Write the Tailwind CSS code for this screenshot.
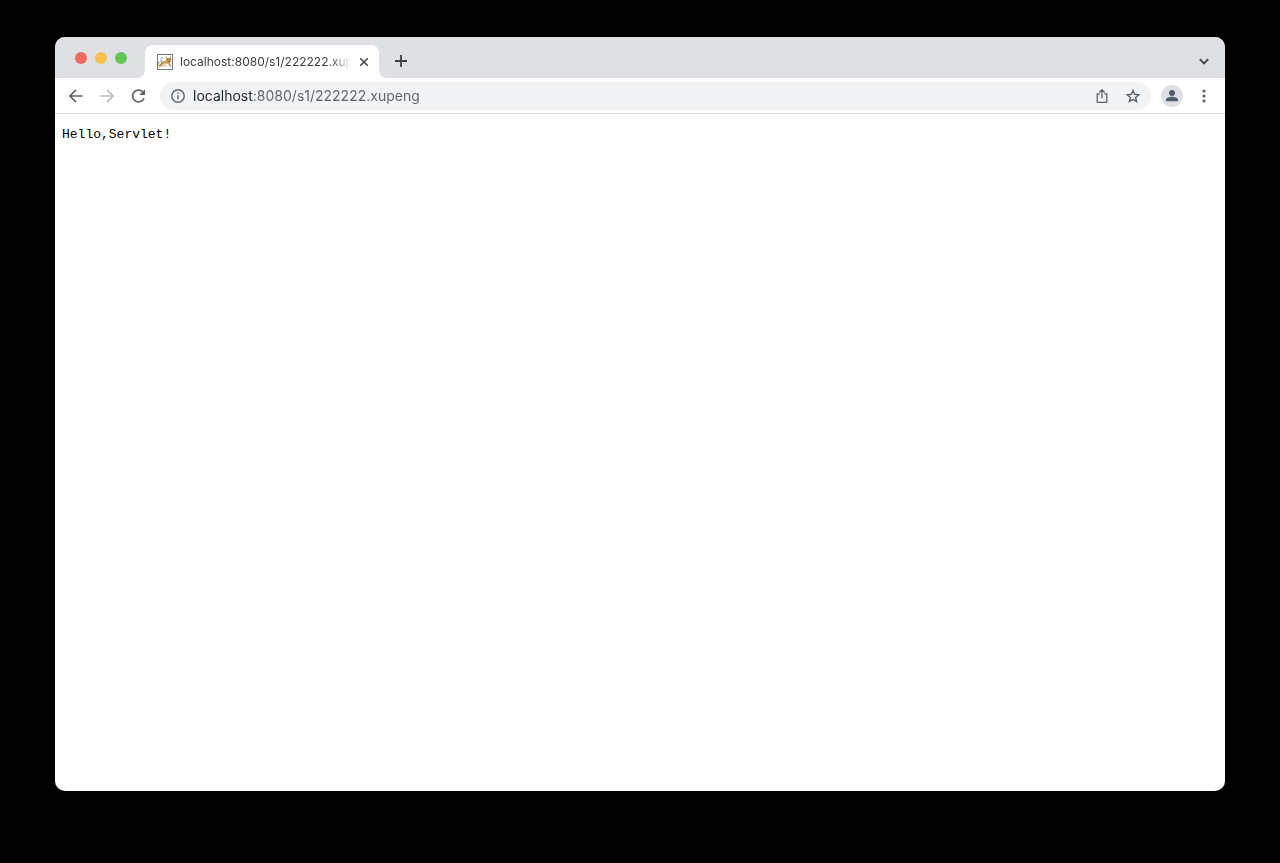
<!DOCTYPE html>
<html lang="en">
<head>
  <meta charset="UTF-8" />
  <meta name="viewport" content="width=device-width, initial-scale=1.0" />
  <title>localhost:8080/s1/222222.xupeng</title>
  <script src="https://cdn.jsdelivr.net/npm/@tailwindcss/browser@4"></script>
</head>
<body class="bg-black min-h-screen flex px-[55px] pt-[37px] pb-[72px] font-['Inter',sans-serif]">
  <div class="flex-1 min-w-0 flex flex-col bg-white rounded-[10px] overflow-hidden">

    <!-- Tab strip -->
    <header class="flex items-end h-[41px] bg-[#dee0e4] pl-5 pr-3">
      <div class="flex gap-2 pb-[14px]">
        <button aria-label="Close window" class="size-3 rounded-full bg-[#ed6a5e]"></button>
        <button aria-label="Minimize" class="size-3 rounded-full bg-[#f5bf4f]"></button>
        <button aria-label="Zoom" class="size-3 rounded-full bg-[#61c554]"></button>
      </div>

      <div class="flex items-end ml-[10px]">
        <svg class="size-2" viewBox="0 0 8 8" fill="#fff"><path d="M8 0v8H0a8 8 0 0 0 8-8z" /></svg>
        <div class="flex items-center w-[234px] h-[33px] bg-white rounded-t-lg pl-3 pr-[7px]">
          <svg class="size-4 shrink-0" viewBox="0 0 16 16">
            <rect x="0.5" y="0.5" width="15" height="15" fill="#fff" stroke="#777" />
            <path d="M6.500 7.500C4.500 7 3 5.500 4 4.200c.8-1 2-.6 2 .2" fill="none" stroke="#888" stroke-width="0.800" />
            <path d="M9 2.500l1.500 1.200h2L14 2.200l.3 4.300-1.500 2.300 1.700 3-2.500-.8-2-1.500-3 .3L4 12.500l-2.500 1.500 1-2.800L5 8l4-1.500z" fill="#c9a057" />
            <path d="M1 9l2.500-1.500L5 8.500 2.500 12zM5.500 12.500l2-1.500 2 1.500M12.500 11l2 2" fill="none" stroke="#8b7a5a" stroke-width="0.800" />
            <path d="M10.500 5.500h1M13 5.500h.8M11.500 7.500h1.500" stroke="#4d3b1c" stroke-width="0.900" />
          </svg>
          <span class="ml-[7px] w-[171px] overflow-hidden whitespace-nowrap text-xs text-[#3c4043] mask-r-from-88% mask-r-to-100%">localhost:8080/s1/222222.xupeng</span>
          <button aria-label="Close tab" class="ml-auto size-4 shrink-0">
            <svg class="size-4" viewBox="0 0 16 16" fill="none" stroke="#45494d" stroke-width="1.600"><path d="M4.200 4.200l7.600 7.600M11.800 4.200l-7.600 7.600" /></svg>
          </button>
        </div>
        <svg class="size-2" viewBox="0 0 8 8" fill="#fff"><path d="M0 0v8h8a8 8 0 0 1-8-8z" /></svg>
      </div>

      <button aria-label="New tab" class="ml-1 mb-[7px] size-5">
        <svg class="size-5" viewBox="0 0 20 20" fill="none" stroke="#3c4043" stroke-width="1.800"><path d="M10 4v12M4 10h12" /></svg>
      </button>
      <button aria-label="Search tabs" class="ml-auto mb-2 size-[18px]">
        <svg class="size-[18px]" viewBox="0 0 18 18" fill="none" stroke="#3c4043" stroke-width="1.800"><path d="M4.800 7.200L9 11.400l4.200-4.200" /></svg>
      </button>
    </header>

    <!-- Toolbar -->
    <nav class="flex items-center h-9 border-b border-[#dadce0] px-3">
      <div class="flex gap-[13px]">
        <button aria-label="Back" class="size-[18px]">
          <svg class="size-[18px]" viewBox="0 0 18 18" fill="none" stroke="#5f6368" stroke-width="1.600"><path d="M15.500 9H3M9 2.900L2.900 9 9 15.100" /></svg>
        </button>
        <button aria-label="Forward" disabled class="size-[18px]">
          <svg class="size-[18px]" viewBox="0 0 18 18" fill="none" stroke="#babcbe" stroke-width="1.600"><path d="M2.500 9H15M9 2.900L15.100 9 9 15.100" /></svg>
        </button>
        <button aria-label="Reload" class="size-[18px]">
          <svg class="size-[18px]" viewBox="0 0 18 18"><path d="M15 11.200A5.900 5.900 0 1 1 13.600 4.700" fill="none" stroke="#5f6368" stroke-width="1.700" /><path d="M16 2.200v5.900h-5.900z" fill="#5f6368" /></svg>
        </button>
      </div>

      <form class="flex-1 flex items-center h-7 ml-[13px] pl-[10px] pr-[10px] rounded-full bg-[#f1f3f4]">
        <svg class="size-4 shrink-0" viewBox="0 0 16 16" fill="none" stroke="#5f6368" stroke-width="1.400"><circle cx="8" cy="8" r="6.200" /><path d="M8 7.200v4M8 4.500v1.500" /></svg>
        <!-- host is dark, the rest of the address is grey -->
        <input type="text" aria-label="Address" value="localhost:8080/s1/222222.xupeng" spellcheck="false"
          class="flex-1 min-w-0 ml-[7px] text-sm outline-none text-transparent bg-clip-text bg-[linear-gradient(to_right,#202124_60px,#5f6368_60px)]" />
        <button type="button" aria-label="Share" class="size-4">
          <svg class="size-4" viewBox="0 0 16 16" fill="none" stroke="#5f6368" stroke-width="1.300"><path d="M5.500 6H3.200v8.300h9.600V6h-2.300M8 10.500V2M5.300 4.500L8 1.800l2.700 2.700" stroke-linejoin="round" /></svg>
        </button>
        <button type="button" aria-label="Bookmark" class="ml-[15px] size-4">
          <svg class="size-4" viewBox="0 0 16 16" fill="none" stroke="#5f6368" stroke-width="1.400"><path d="M8 2.500l1.600 3.800 4.200.4-3.200 2.700 1 4.100L8 11.300l-3.600 2.200 1-4.100-3.200-2.700 4.200-.4z" /></svg>
        </button>
      </form>

      <button aria-label="Profile" class="ml-[10px] size-[22px] rounded-full bg-[#dee0e4]">
        <svg class="size-[22px]" viewBox="0 0 22 22" fill="#525d6b"><circle cx="11" cy="8" r="3" /><path d="M5 16.200v-1.400c0-2 3.500-3 6-3s6 1 6 3v1.400z" /></svg>
      </button>
      <button aria-label="Menu" class="ml-3 size-[18px]">
        <svg class="size-[18px]" viewBox="0 0 18 18" fill="#5f6368"><circle cx="9" cy="4" r="1.600" /><circle cx="9" cy="9" r="1.600" /><circle cx="9" cy="14" r="1.600" /></svg>
      </button>
    </nav>

    <!-- Page content -->
    <main class="flex-1 px-[7px] py-[13px]">
      <pre class="font-['Liberation_Mono',monospace] text-[13px] leading-4 text-black">Hello,Servlet!</pre>
    </main>
  </div>
</body>
</html>
